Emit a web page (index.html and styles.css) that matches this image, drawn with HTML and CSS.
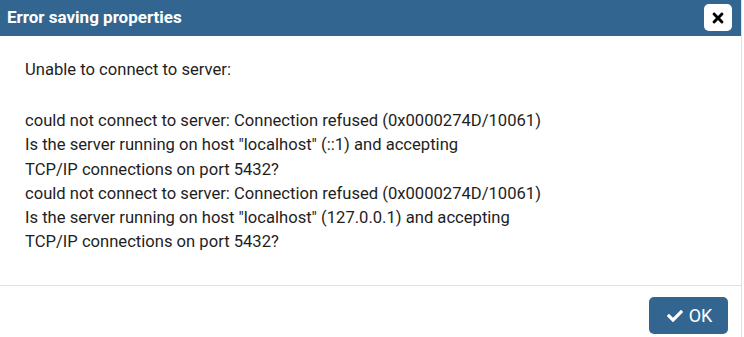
FILE: index.html
```html
<!DOCTYPE html>
<html>
<head>
<meta charset="utf-8">
<link rel="stylesheet" href="styles.css">
</head>
<body>
<div class="dialog">
  <div class="header">
    <div class="title">Error saving properties</div>
    <button class="close" aria-label="Close">
      <svg viewBox="0 0 352 512" width="12" height="16"><path d="M242.72 256l100.07-100.07c12.28-12.28 12.28-32.19 0-44.48l-22.24-22.24c-12.28-12.28-32.19-12.28-44.48 0L176 189.280 75.93 89.21c-12.28-12.28-32.19-12.28-44.48 0L9.21 111.45c-12.28 12.280-12.28 32.19 0 44.48L109.28 256 9.21 356.07c-12.28 12.28-12.28 32.19 0 44.48l22.24 22.24c12.28 12.28 32.2 12.28 44.48 0L176 322.72l100.07 100.07c12.28 12.28 32.2 12.28 44.48 0l22.24-22.24c12.28-12.28 12.28-32.19 0-44.48L242.72 256z" fill="#000"/></svg>
    </button>
  </div>
  <div class="body">
    <p class="intro">Unable to connect to server:</p>
    <p class="detail">could not connect to server: Connection refused (0x0000274D/10061)<br>Is the server running on host "localhost" (::1) and accepting<br>TCP/IP connections on port 5432?<br>could not connect to server: Connection refused (0x0000274D/10061)<br>Is the server running on host "localhost" (127.0.0.1) and accepting<br>TCP/IP connections on port 5432?</p>
  </div>
  <div class="footer">
    <button class="ok">
      <svg viewBox="0 0 512 512" width="16" height="16"><path d="M173.898 439.404l-166.4-166.4c-9.997-9.997-9.997-26.206 0-36.204l36.203-36.204c9.997-9.998 26.207-9.998 36.204 0L192 312.69 432.095 72.596c9.997-9.997 26.207-9.997 36.204 0l36.203 36.204c9.997 9.997 9.997 26.206 0 36.204l-294.4 294.401c-9.998 9.997-26.207 9.997-36.204-.001z" fill="#fff"/></svg>
      <span>OK</span>
    </button>
  </div>
</div>
</body>
</html>
```

FILE: styles.css
```css
html, body {
  margin: 0;
  padding: 0;
  background: #fff;
}
body {
  font-family: Roboto, "Liberation Sans", sans-serif;
  color: #1e1e1e;
}
.dialog {
  width: 742px;
  height: 337px;
  border-right: 1px solid #dde0e6;
  display: flex;
  flex-direction: column;
  box-sizing: border-box;
}
.header {
  height: 36px;
  background: #326690;
  display: flex;
  align-items: center;
  justify-content: space-between;
  padding: 0 9px 0 7px;
  flex: none;
}
.title {
  color: #fff;
  font-weight: bold;
  font-size: 17px;
  margin-top: -2px;
}
.close {
  width: 28px;
  height: 27px;
  background: #fff;
  border: none;
  border-radius: 5px;
  display: flex;
  align-items: center;
  justify-content: center;
  padding: 0;
  margin-top: -1px;
}
.body {
  flex: 1;
  padding: 22px 25px 0;
  font-size: 16.6px;
  line-height: 24.2px;
}
.body p {
  margin: 0;
}
.intro {
  margin-bottom: 27px !important;
}
.footer {
  flex: none;
  height: 52px;
  border-top: 1px solid #dde0e6;
  display: flex;
  justify-content: flex-end;
  align-items: flex-start;
  padding: 11px 13px 0 0;
  box-sizing: border-box;
}
.ok {
  width: 79px;
  height: 37px;
  background: #326690;
  border: none;
  border-radius: 5px;
  color: #fff;
  font-family: Roboto, "Liberation Sans", sans-serif;
  font-size: 18px;
  display: flex;
  align-items: center;
  justify-content: center;
  gap: 6px;
  padding: 0 0 0 2px;
}
```
